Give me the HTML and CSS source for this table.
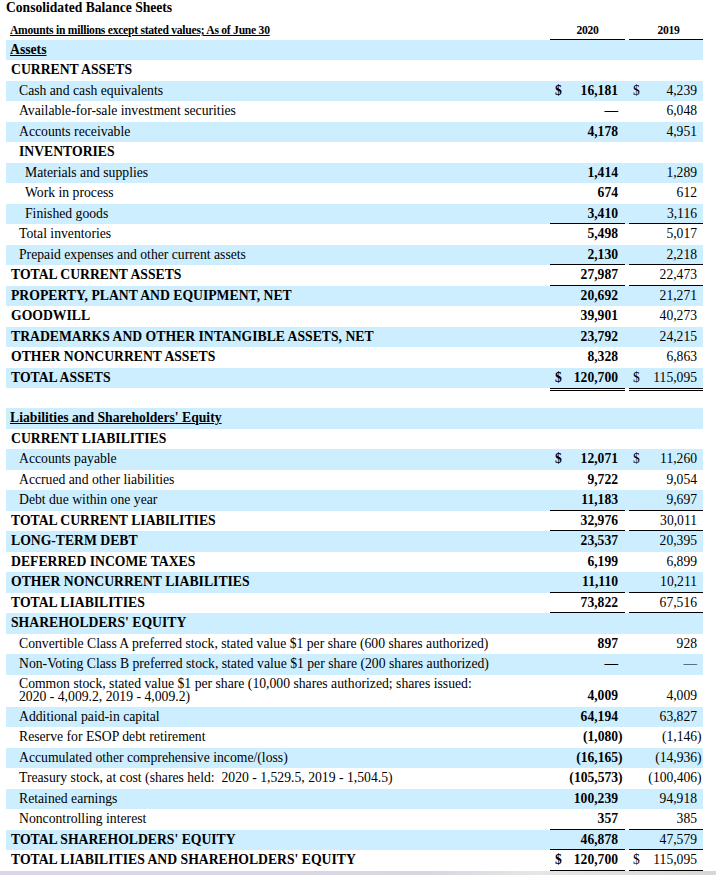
FILE: index.html
```html
<!DOCTYPE html>
<html lang="en">
<head>
<meta charset="utf-8">
<title>Consolidated Balance Sheets</title>
<link rel="stylesheet" href="styles.css">
</head>
<body>
<h1 class="title">Consolidated Balance Sheets</h1>
<div class="sheet">
  <div class="row head">
    <div class="note">Amounts in millions except stated values; As of June 30</div>
    <div class="h">2020</div>
    <div class="h h19">2019</div>
  </div>

  <div class="row alt"><div class="lbl sec">Assets</div><div></div><div></div></div>
  <div class="row"><div class="lbl top">CURRENT ASSETS</div><div></div><div></div></div>
  <div class="row alt"><div class="lbl">Cash and cash equivalents</div><div class="v cur"><span>$</span><span class="n">16,181</span></div><div class="v y19"><span>$</span><span class="n">4,239</span></div></div>
  <div class="row"><div class="lbl">Available-for-sale investment securities</div><div class="v cur"><span class="n">—</span></div><div class="v y19"><span class="n">6,048</span></div></div>
  <div class="row alt"><div class="lbl">Accounts receivable</div><div class="v cur"><span class="n">4,178</span></div><div class="v y19"><span class="n">4,951</span></div></div>
  <div class="row"><div class="lbl bold">INVENTORIES</div><div></div><div></div></div>
  <div class="row alt"><div class="lbl l2">Materials and supplies</div><div class="v cur"><span class="n">1,414</span></div><div class="v y19"><span class="n">1,289</span></div></div>
  <div class="row"><div class="lbl l2">Work in process</div><div class="v cur"><span class="n">674</span></div><div class="v y19"><span class="n">612</span></div></div>
  <div class="row alt"><div class="lbl l2">Finished goods</div><div class="v cur u"><span class="n">3,410</span></div><div class="v y19 u"><span class="n">3,116</span></div></div>
  <div class="row"><div class="lbl">Total inventories</div><div class="v cur"><span class="n">5,498</span></div><div class="v y19"><span class="n">5,017</span></div></div>
  <div class="row alt"><div class="lbl">Prepaid expenses and other current assets</div><div class="v cur u"><span class="n">2,130</span></div><div class="v y19 u"><span class="n">2,218</span></div></div>
  <div class="row"><div class="lbl top">TOTAL CURRENT ASSETS</div><div class="v cur u"><span class="n">27,987</span></div><div class="v y19 u"><span class="n">22,473</span></div></div>
  <div class="row alt"><div class="lbl top">PROPERTY, PLANT AND EQUIPMENT, NET</div><div class="v cur"><span class="n">20,692</span></div><div class="v y19"><span class="n">21,271</span></div></div>
  <div class="row"><div class="lbl top">GOODWILL</div><div class="v cur"><span class="n">39,901</span></div><div class="v y19"><span class="n">40,273</span></div></div>
  <div class="row alt"><div class="lbl top">TRADEMARKS AND OTHER INTANGIBLE ASSETS, NET</div><div class="v cur"><span class="n">23,792</span></div><div class="v y19"><span class="n">24,215</span></div></div>
  <div class="row"><div class="lbl top">OTHER NONCURRENT ASSETS</div><div class="v cur"><span class="n">8,328</span></div><div class="v y19"><span class="n">6,863</span></div></div>
  <div class="row alt"><div class="lbl top">TOTAL ASSETS</div><div class="v cur uu"><span>$</span><span class="n">120,700</span></div><div class="v y19 uu"><span>$</span><span class="n">115,095</span></div></div>

  <div class="row"><div></div><div></div><div></div></div>

  <div class="row alt"><div class="lbl sec">Liabilities and Shareholders' Equity</div><div></div><div></div></div>
  <div class="row"><div class="lbl top">CURRENT LIABILITIES</div><div></div><div></div></div>
  <div class="row alt"><div class="lbl">Accounts payable</div><div class="v cur"><span>$</span><span class="n">12,071</span></div><div class="v y19"><span>$</span><span class="n">11,260</span></div></div>
  <div class="row"><div class="lbl">Accrued and other liabilities</div><div class="v cur"><span class="n">9,722</span></div><div class="v y19"><span class="n">9,054</span></div></div>
  <div class="row alt"><div class="lbl">Debt due within one year</div><div class="v cur u"><span class="n">11,183</span></div><div class="v y19 u"><span class="n">9,697</span></div></div>
  <div class="row"><div class="lbl top">TOTAL CURRENT LIABILITIES</div><div class="v cur u"><span class="n">32,976</span></div><div class="v y19 u"><span class="n">30,011</span></div></div>
  <div class="row alt"><div class="lbl top">LONG-TERM DEBT</div><div class="v cur"><span class="n">23,537</span></div><div class="v y19"><span class="n">20,395</span></div></div>
  <div class="row"><div class="lbl top">DEFERRED INCOME TAXES</div><div class="v cur"><span class="n">6,199</span></div><div class="v y19"><span class="n">6,899</span></div></div>
  <div class="row alt"><div class="lbl top">OTHER NONCURRENT LIABILITIES</div><div class="v cur u"><span class="n">11,110</span></div><div class="v y19 u"><span class="n">10,211</span></div></div>
  <div class="row"><div class="lbl top">TOTAL LIABILITIES</div><div class="v cur u"><span class="n">73,822</span></div><div class="v y19 u"><span class="n">67,516</span></div></div>
  <div class="row alt"><div class="lbl top">SHAREHOLDERS' EQUITY</div><div></div><div></div></div>
  <div class="row"><div class="lbl">Convertible Class A preferred stock, stated value $1 per share (600 shares authorized)</div><div class="v cur"><span class="n">897</span></div><div class="v y19"><span class="n">928</span></div></div>
  <div class="row alt"><div class="lbl">Non-Voting Class B preferred stock, stated value $1 per share (200 shares authorized)</div><div class="v cur"><span class="n">—</span></div><div class="v y19"><span class="n">—</span></div></div>
  <div class="row tall"><div class="lbl">Common stock, stated value $1 per share (10,000 shares authorized; shares issued: 2020 - 4,009.2, 2019 - 4,009.2)</div><div class="v cur"><span class="n">4,009</span></div><div class="v y19"><span class="n">4,009</span></div></div>
  <div class="row alt"><div class="lbl">Additional paid-in capital</div><div class="v cur"><span class="n">64,194</span></div><div class="v y19"><span class="n">63,827</span></div></div>
  <div class="row"><div class="lbl">Reserve for ESOP debt retirement</div><div class="v cur"><span class="n">(1,080<span class="rp">)</span></span></div><div class="v y19"><span class="n">(1,146<span class="rp">)</span></span></div></div>
  <div class="row alt"><div class="lbl">Accumulated other comprehensive income/(loss)</div><div class="v cur"><span class="n">(16,165<span class="rp">)</span></span></div><div class="v y19"><span class="n">(14,936<span class="rp">)</span></span></div></div>
  <div class="row"><div class="lbl">Treasury stock, at cost (shares held:&nbsp; 2020 - 1,529.5, 2019 - 1,504.5)</div><div class="v cur"><span class="n">(105,573<span class="rp">)</span></span></div><div class="v y19"><span class="n">(100,406<span class="rp">)</span></span></div></div>
  <div class="row alt"><div class="lbl">Retained earnings</div><div class="v cur"><span class="n">100,239</span></div><div class="v y19"><span class="n">94,918</span></div></div>
  <div class="row"><div class="lbl">Noncontrolling interest</div><div class="v cur u"><span class="n">357</span></div><div class="v y19 u"><span class="n">385</span></div></div>
  <div class="row alt"><div class="lbl top">TOTAL SHAREHOLDERS' EQUITY</div><div class="v cur u"><span class="n">46,878</span></div><div class="v y19 u"><span class="n">47,579</span></div></div>
  <div class="row"><div class="lbl top">TOTAL LIABILITIES AND SHAREHOLDERS' EQUITY</div><div class="v cur uu"><span>$</span><span class="n">120,700</span></div><div class="v y19 uu"><span>$</span><span class="n">115,095</span></div></div>
</div>
<div class="scrollbar"></div>
</body>
</html>
```

FILE: styles.css
```css
html, body {
  margin: 0;
  padding: 0;
  background: #ffffff;
}

body {
  font-family: "Liberation Serif", "Times New Roman", serif;
  color: #000000;
  height: 875px;
  overflow: hidden;
  display: flex;
  flex-direction: column;
}

.title {
  margin: 0;
  padding-left: 6px;
  font-size: 13.6px;
  font-weight: bold;
  line-height: 15px;
  height: 15px;
}

.sheet {
  width: 697px;
  margin-left: 6px;
}

.row {
  display: grid;
  grid-template-columns: 1fr 75px 74px;
  column-gap: 4px;
  height: 20.47px;
  font-size: 13.6px;
  line-height: 20.47px;
  white-space: nowrap;
}

.row.alt {
  background: #cceeff;
}

.row.head {
  height: 25px;
  font-size: 11.6px;
  line-height: 14px;
  font-weight: bold;
  align-items: end;
  letter-spacing: -0.25px;
}

.head .note {
  padding-left: 4px;
  padding-bottom: 2px;
  text-decoration: underline;
}

.head .h {
  text-align: center;
  border-bottom: 1px solid #000;
  padding-bottom: 1px;
}

.head .h19 {
  padding-left: 5px;
}

.lbl {
  padding-left: 13px;
  font-size: 13.7px;
}

.lbl.top {
  padding-left: 5px;
  font-weight: bold;
}

.lbl.sec {
  padding-left: 4px;
  font-weight: bold;
  text-decoration: underline;
}

.lbl.bold {
  font-weight: bold;
}

.lbl.l2 {
  padding-left: 19px;
}

.row.tall {
  height: 32.2px;
}

.tall .lbl {
  white-space: normal;
  line-height: 13px;
  padding-top: 2.4px;
  padding-right: 54px;
}

.tall .v {
  align-self: end;
}

.v {
  display: flex;
  justify-content: space-between;
  padding: 0 7px 0 5px;
}

.v.y19 {
  padding: 0 6px 0 4px;
}

.v.cur {
  font-weight: bold;
}

.v .n {
  margin-left: auto;
}

.rp {
  margin-right: -0.34em;
}

.u {
  box-shadow: inset 0 -1px 0 #000;
}

.uu {
  border-bottom: 3px double #000;
}

.scrollbar {
  margin-top: auto;
  height: 4px;
  background: linear-gradient(to right, #ddd6e6 0%, #d9d6e2 60%, #e6e6e6 75%, #d6d6d6 100%);
}
```
